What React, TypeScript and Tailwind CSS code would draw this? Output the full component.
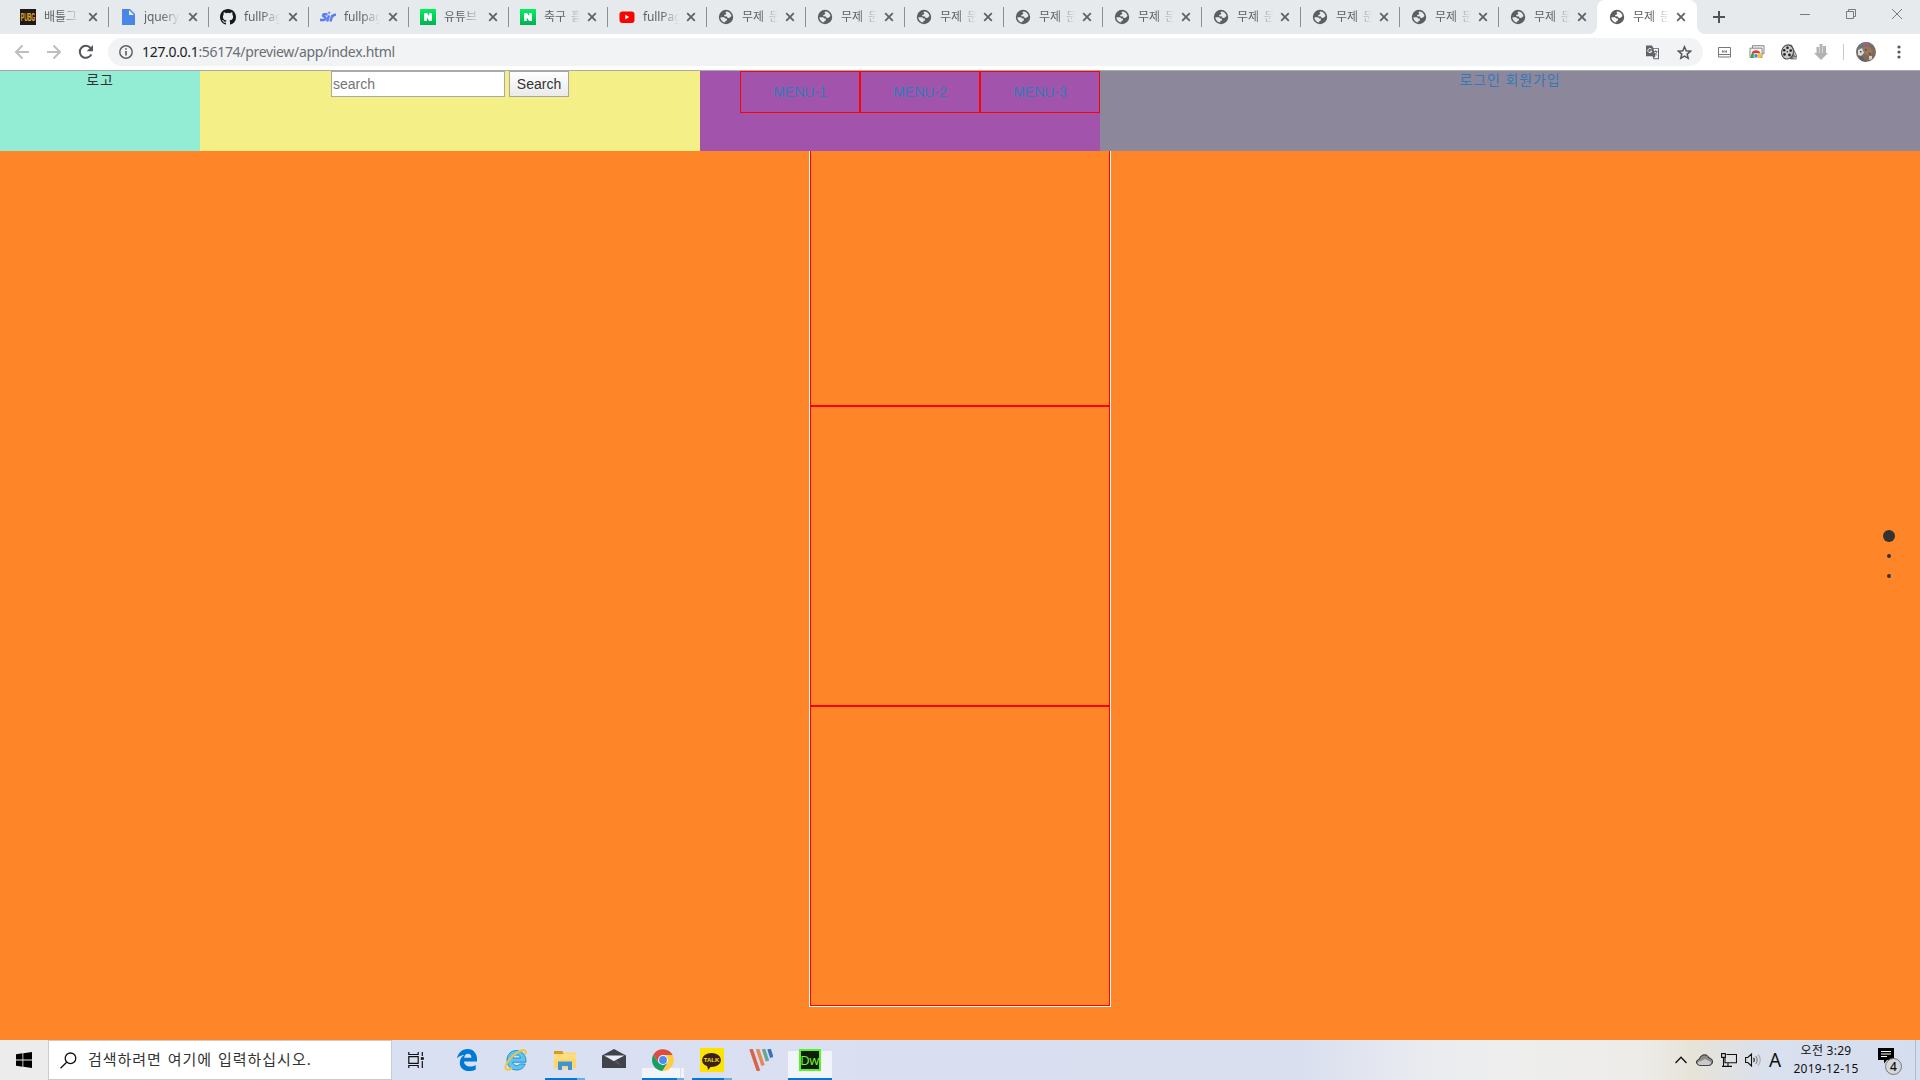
import type { ReactNode } from "react";

type TabKind = "pubg" | "doc" | "github" | "sir" | "naver" | "youtube" | "globe";

const tabs: { kind: TabKind; title: string; size: string; active?: boolean }[] = [
  { kind: "pubg", title: "배틀그", size: "w-[101px] pl-3" },
  { kind: "doc", title: "jquery_", size: "w-[100px] pl-[11px]" },
  { kind: "github", title: "fullPag", size: "w-[100px] pl-[11px]" },
  { kind: "sir", title: "fullpag", size: "w-[100px] pl-[11px]" },
  { kind: "naver", title: "유튜브", size: "w-[100px] pl-[11px]" },
  { kind: "naver", title: "축구 흘", size: "w-[99px] pl-[11px]" },
  { kind: "youtube", title: "fullPag", size: "w-[99px] pl-[11px]" },
  ...Array.from({ length: 9 }, () => ({
    kind: "globe" as TabKind,
    title: "무제 문",
    size: "w-[99px] pl-[11px]",
  })),
  { kind: "globe", title: "무제 문", size: "-ml-px w-[100px] pl-3", active: true },
];

function Favicon({ kind, active }: { kind: TabKind; active?: boolean }) {
  switch (kind) {
    case "pubg":
      return (
        <span className="flex size-4 shrink-0 items-center justify-center bg-[#1c1a1c]">
          <svg className="size-4" viewBox="0 0 16 16">
            <text
              transform="translate(0.8 12) scale(0.5 1.1)"
              className="font-['Liberation_Sans'] text-[10px] font-bold"
              fill="#f0b01c"
            >
              PUBG
            </text>
          </svg>
        </span>
      );
    case "doc":
      return (
        <svg className="size-4 shrink-0" viewBox="0 0 16 16">
          <path d="M2 0h8l5 5v11H2z" fill="#4a86e8" />
          <path d="M9 1l5 5H9z" fill="#e8f0fd" />
        </svg>
      );
    case "github":
      return (
        <svg className="size-4 shrink-0" viewBox="0 0 16 16" fill="#15191d">
          <path d="M8 0C3.58 0 0 3.58 0 8c0 3.54 2.29 6.53 5.47 7.59.4.07.55-.17.55-.38 0-.19-.01-.82-.01-1.49-2.01.37-2.53-.49-2.69-.94-.09-.23-.48-.94-.82-1.13-.28-.15-.68-.52-.01-.53.63-.01 1.08.58 1.23.82.72 1.21 1.87.87 2.33.66.07-.52.28-.87.51-1.07-1.78-.2-3.64-.89-3.64-3.95 0-.87.31-1.59.82-2.15-.08-.2-.36-1.02.08-2.12 0 0 .67-.21 2.2.82a7.6 7.6 0 0 1 4 0c1.53-1.04 2.2-.82 2.2-.82.44 1.1.16 1.92.08 2.12.51.56.82 1.27.82 2.15 0 3.07-1.87 3.75-3.65 3.95.29.25.54.73.54 1.48 0 1.07-.01 1.93-.01 2.2 0 .21.15.46.55.38A8 8 0 0 0 16 8c0-4.42-3.58-8-8-8z" />
        </svg>
      );
    case "sir":
      return (
        <svg className="size-4 shrink-0" viewBox="0 0 16 16" fill="none" stroke="#5b7cf0" strokeWidth="2.4">
          <path d="M7.5 5.200H4.5C2.6 5.200 2.300 7.400 4.300 7.800c2 .3 1.600 3.200-.8 3.200H0M9 6.300L7.200 12.500M12.300 6L10.500 12.500M11.700 8.500C12.500 6.300 13.500 5.500 16 5.700" />
          <circle cx="9.200" cy="3.800" r="0.800" strokeWidth="1" />
        </svg>
      );
    case "naver":
      return (
        <span className="flex size-4 shrink-0 items-center justify-center bg-linear-to-b from-[#00f060] to-[#02b354]">
          <svg className="size-4" viewBox="0 0 16 16">
            <path d="M4 4h3l2.200 3.300V4H12v8H9.200L6.800 8.600V12H4z" fill="#fff" />
          </svg>
        </span>
      );
    case "youtube":
      return (
        <svg className="size-4 shrink-0" viewBox="0 0 16 16">
          <rect x="0.500" y="2.500" width="15" height="11.500" rx="3" fill="#f00" />
          <path d="M6.300 5.800v4.600l3.900-2.300z" fill="#fff" />
        </svg>
      );
    default:
      return (
        <svg className="size-4 shrink-0" viewBox="0 0 16 16">
          <circle cx="8" cy="8" r="7.200" fill="#5a5e62" />
          <g fill={active ? "#fff" : "#e6eaed"}>
            <path d="M8.200 2.500c2.600 0 4.900 1.900 5.300 4.600l-1.300 1.200-1.200.8H9.700L8.900 7.500 6.200 7.300V5.900l1.500-.4.700-1.300-1-.6z" />
            <path d="M2.400 8.300h3.700l1.200 1.200h1.600v1.900l-1.600.6v1.500C4.500 13.500 2.500 11 2.400 8.300z" />
          </g>
        </svg>
      );
  }
}

function CloseX() {
  return (
    <svg className="size-[10px] shrink-0" viewBox="0 0 10 10" stroke="#5f6368" strokeWidth="1.800">
      <path d="M1.200 1.200l7.600 7.600M8.800 1.200L1.200 8.800" />
    </svg>
  );
}

function TabStrip() {
  return (
    <div className="flex h-[34px] bg-[#e6eaed] pl-2">
      {tabs.map((t, i) => (
        <div
          key={i}
          className={`${t.size} relative flex shrink-0 items-center ${t.active ? "rounded-t-lg bg-white" : ""}`}
        >
          <Favicon kind={t.kind} active={t.active} />
          <span className="ml-2 w-[36px] mask-r-from-50% mask-r-to-100% text-[12px] leading-4 tracking-[-0.1px] whitespace-nowrap text-[#5f6368] [word-spacing:2px]">
            {t.title}
          </span>
          <span className={i > 4 ? "ml-[7px] flex" : "ml-2 flex"}>
            <CloseX />
          </span>
          {!t.active && i !== 15 && <span className="absolute top-[7px] right-0 h-5 w-px bg-[#8b8f94]" />}
          {t.active && (
            <>
              <svg className="absolute bottom-0 -left-2 size-2" viewBox="0 0 8 8">
                <path d="M8 0v8H0a8 8 0 0 0 8-8z" fill="#fff" />
              </svg>
              <svg className="absolute -right-2 bottom-0 size-2" viewBox="0 0 8 8">
                <path d="M0 0v8h8a8 8 0 0 1-8-8z" fill="#fff" />
              </svg>
            </>
          )}
        </div>
      ))}
      <svg className="mt-[11px] ml-4 size-3" viewBox="0 0 12 12" stroke="#4f5357" strokeWidth="2">
        <path d="M6 0v12M0 6h12" />
      </svg>
      <div className="mt-[9px] ml-auto flex gap-9 pr-[18px]">
        <svg className="size-[10px]" viewBox="0 0 10 10" stroke="#777b7e">
          <path d="M0 5.500h10" />
        </svg>
        <svg className="size-[10px]" viewBox="0 0 10 10" stroke="#777b7e" fill="none">
          <path d="M.5 2.500h7v7h-7zM2.500 2.500v-2h7v7h-2" />
        </svg>
        <svg className="size-[10px]" viewBox="0 0 10 10" stroke="#777b7e">
          <path d="M0 0l10 10M10 0L0 10" />
        </svg>
      </div>
    </div>
  );
}

function Toolbar() {
  return (
    <div className="flex h-[37px] items-center border-b border-[#aaaaad] bg-white pl-[14px]">
      <svg className="size-4" viewBox="0 0 16 16" fill="none" stroke="#bcbec0" strokeWidth="2">
        <path d="M15 8H2.500M8.500 1.500L2 8l6.500 6.500" />
      </svg>
      <svg className="ml-4 size-4" viewBox="0 0 16 16" fill="none" stroke="#bcbec0" strokeWidth="2">
        <path d="M1 8h12.500M7.500 1.500L14 8l-6.500 6.500" />
      </svg>
      <svg className="ml-4 size-4" viewBox="0 0 16 16">
        <path d="M13.300 10.300A6 6 0 1 1 12.500 4" fill="none" stroke="#53575b" strokeWidth="2" />
        <path d="M15 1v6.300H8.700z" fill="#53575b" />
      </svg>
      <div className="ml-[14px] flex h-7 w-[1595px] items-center rounded-full bg-[#f1f3f4] px-[11px]">
        <svg className="size-[14px]" viewBox="0 0 14 14" fill="none" stroke="#5f6368" strokeWidth="1.500">
          <circle cx="7" cy="7" r="6.200" />
          <path d="M7 6v4.500M7 3.200v1.600" strokeWidth="1.700" />
        </svg>
        <span className="ml-[9px] w-[254px] text-[14px] leading-5 tracking-[-0.320px] whitespace-nowrap text-[#6a6e72]">
          <span className="text-[#202124]">127.0.0.1</span>:56174/preview/app/index.html
        </span>
        <svg className="ml-auto size-[15px]" viewBox="0 0 15 15">
          <path d="M1 .5h6l1.500 2.700H14v11H8.500l-1-3H1z" fill="#5f6368" />
          <path d="M8.500 4H13v9.300H8.500l2-2z" fill="#f1f3f4" />
          <path d="M6.500 4.200a2.100 2.100 0 1 0 .4 2H4.800" fill="none" stroke="#f1f3f4" />
          <path d="M8.500 6.500h4M10.500 5.500v1M11.800 6.500c-.5 2-1.500 3-2.500 3.700M9.500 8l2.500 2.500" fill="none" stroke="#5f6368" strokeWidth=".9" />
        </svg>
        <svg className="ml-[17px] size-[15px]" viewBox="0 0 15 15" fill="none" stroke="#53575b" strokeWidth="1.500">
          <path d="M7.500 1.800l1.700 4 4.300.4-3.300 2.900 1 4.200-3.700-2.200-3.700 2.200 1-4.200L1.500 6.200l4.300-.4z" />
        </svg>
      </div>
      <svg className="ml-[15px] h-[11px] w-[13px]" viewBox="0 0 13 11" fill="none" stroke="#777">
        <path d="M.5.5h12v7H.5zM.5 7.500h12v2.500H.5z" />
        <path d="M4.500 5.500v-2l1.500 2v-2M7 3.500l1 2M8.500 3.500v2" strokeWidth=".9" />
      </svg>
      <svg className="ml-[18px] h-4 w-[16px]" viewBox="0 0 16 16">
        <path d="M3.500 4V1.700h11.500v8h-2" fill="#eee" stroke="#888" />
        <path d="M1 4.200h12v9.300H1z" fill="#f7f7f7" stroke="#888" />
        <path d="M2 14a5 5 0 0 1 2-5.500L7 12z" fill="#31a952" />
        <path d="M2.500 9.300a4.800 4.800 0 0 1 9 0H7z" fill="#e33b2e" />
        <path d="M9 9.300h2.500a4.500 4.500 0 0 1 .2 4.700H7z" fill="#fbc116" />
        <circle cx="7" cy="11.800" r="2.100" fill="#4285f4" stroke="#fff" strokeWidth=".6" />
      </svg>
      <svg className="ml-4 size-4" viewBox="0 0 16 16">
        <path d="M6 1h4.500l5 10.500V15h-6z" fill="#777" stroke="#444" strokeWidth=".6" />
        <path d="M10.500 3l4 9M12 14h4" stroke="#ddd" />
        <ellipse cx="6.500" cy="8" rx="5.900" ry="7" fill="#ccc" stroke="#444" transform="rotate(10 6.500 8)" />
        <g fill="#222">
          <circle cx="6.500" cy="3.800" r="1.300" />
          <circle cx="3.200" cy="6.200" r="1.300" />
          <circle cx="9.700" cy="6.600" r="1.300" />
          <circle cx="3.500" cy="10.400" r="1.300" />
          <circle cx="8.500" cy="11" r="1.400" />
          <circle cx="6.300" cy="7.700" r=".7" />
        </g>
      </svg>
      <svg className="ml-[17px] h-4 w-[14px]" viewBox="0 0 14 16" fill="#b3b3b3">
        <path d="M2.500 3h2.500v6h.5V0h3v9h.5V2h3v7h2l-7 7-7-7h2.500z" />
      </svg>
      <span className="ml-[15px] h-4 w-px bg-[#c5c7c9]" />
      <svg className="ml-3 size-5 rounded-full" viewBox="0 0 20 20">
        <path d="M0 0h20v20H0z" fill="#7d6a5a" />
        <path d="M0 0h20v5L14 3 6 5 0 9z" fill="#6b7678" />
        <path d="M7 1h5v2H7z" fill="#c0508a" />
        <path d="M6 5l7-1 4 5-3 5-6-2z" fill="#94765c" />
        <path d="M2 8l4-2 2 5-3 3-3-1z" fill="#d5dbe2" />
        <path d="M13 14l3 0v3l-3 1z" fill="#d8d0c7" />
        <path d="M4 9h1.500v1.500H4zM9 7h1.500v1.500H9zM13 11h1.500v1.500H13z" fill="#4a4340" />
        <path d="M3 14l4 1 3 5H5z" fill="#56626d" />
      </svg>
      <svg className="ml-[21px] h-4 w-1" viewBox="0 0 4 16" fill="#53575b">
        <circle cx="2" cy="3" r="1.600" />
        <circle cx="2" cy="8" r="1.600" />
        <circle cx="2" cy="13" r="1.600" />
      </svg>
    </div>
  );
}

function PageView() {
  return (
    <main className="relative flex h-[969px] flex-col bg-[#ff8628] font-['Liberation_Sans','Noto_Sans_CJK_KR',sans-serif] text-[14px] leading-5 text-[#333]">
      <header className="flex h-20 shrink-0">
        <div className="w-[200px] bg-[#93edd4] text-center leading-[18px] tracking-[0.800px]">로고</div>
        <div className="flex w-[500px] items-start justify-center gap-1 bg-[#f4ef86]">
          <input
            className="h-[26px] w-[174px] border border-[#a9a9a9] bg-white px-px text-[14px] placeholder:text-[#757575]"
            placeholder="search"
          />
          <button className="h-[26px] w-[60px] border border-[#a6a6a6] bg-linear-to-b from-white to-[#eaeaea] text-[14px] leading-none">
            Search
          </button>
        </div>
        <nav className="flex w-[400px] items-start bg-[#a254ad] pl-10 text-[#337ab7]">
          {["MENU-1", "MENU-2", "MENU-3"].map((m) => (
            <a key={m} className="flex h-[42px] w-[120px] items-center justify-center border border-[#f00]">
              {m}
            </a>
          ))}
        </nav>
        <div className="flex-1 bg-[#8d879b] text-center leading-[18px] tracking-[0.900px] text-[#337ab7]">
          로그인 회원가입
        </div>
      </header>
      <section className="mx-auto w-[302px] border-x border-b border-white">
        <div className="h-[255px] border-x border-b border-[#f00]" />
        <div className="h-[300px] border border-[#f00]" />
        <div className="h-[300px] border border-[#f00]" />
      </section>
      <div className="absolute top-[459px] right-[25px] flex w-3 flex-col items-center">
        <span className="size-3 rounded-full bg-[#333]" />
        <span className="mt-3 size-1 rounded-full bg-[#333]" />
        <span className="mt-4 size-1 rounded-full bg-[#333]" />
      </div>
    </main>
  );
}

function TaskItem({ children, state }: { children: ReactNode; state?: "stack" | "running" | "current" }) {
  return (
    <div className="relative flex h-10 w-[49px] shrink-0 items-center justify-center">
      {state === "stack" && (
        <>
          <span className="absolute bottom-0 left-1 h-3 w-[38px] bg-[#f1f4fb]" />
          <span className="absolute bottom-0 left-[43px] h-3 w-[3px] bg-[#f1f4fb]" />
        </>
      )}
      {state === "current" && <span className="absolute bottom-0 left-[3px] h-[29px] w-11 bg-[#f1f4fb]" />}
      <span className="relative flex">{children}</span>
      {state === "running" && (
        <span className="absolute bottom-0 left-[5px] flex h-[2px] w-10">
          <span className="w-8 bg-[#0078d7]" />
          <span className="w-2 bg-[#66afe6]" />
        </span>
      )}
      {state === "stack" && (
        <span className="absolute bottom-0 left-1 flex h-[2px]">
          <span className="w-[35px] bg-[#0078d7]" />
          <span className="w-[7px] bg-[#66afe6]" />
        </span>
      )}
      {state === "current" && <span className="absolute bottom-0 left-[3px] h-[2px] w-11 bg-[#0078d7]" />}
    </div>
  );
}

function Taskbar() {
  return (
    <footer className="flex h-10 bg-[linear-gradient(90deg,#ececec_0,#ececec_48px,#d9e0f1_400px,#dadff0_1300px,#e9ebef_1420px,#eeeeee_1500px,#edece9_1640px,#e6e3d8_1695px,#d9e0ee_1770px,#d5deef_1920px)]">
      <div className="flex w-12 items-center justify-center">
        <svg className="size-4" viewBox="0 0 16 16">
          <path d="M0 2.200L6.500 1.300v6.200H0zM7.300 1.200L16 0v7.500H7.300zM0 8.400h6.500v6.300L0 13.800zM7.300 8.400H16V16l-8.700-1.200z" />
        </svg>
      </div>
      <div className="flex w-[344px] items-center border border-[#c9cbcd] bg-white pl-[11px]">
        <svg className="size-[17px]" viewBox="0 0 17 17" fill="none" stroke="#111" strokeWidth="1.300">
          <circle cx="10.500" cy="6.300" r="5.300" />
          <path d="M6.700 10.200L.5 16.300" />
        </svg>
        <span className="ml-[11px] pb-px text-[15px] tracking-[0.980px] whitespace-nowrap text-[#333] [word-spacing:1px]">
          검색하려면 여기에 입력하십시오.
        </span>
      </div>
      <div className="flex w-[50px] items-center pl-4">
        <svg className="h-4 w-4" viewBox="0 0 16 16" fill="none" stroke="#111" strokeWidth="1.200">
          <path d="M.8 0v2.500h9.400V0M.8 4.700h9.400v6.600H.8zM.8 16v-2.500h9.400V16M14.300 0v4M14.300 9v7" />
          <path d="M12.800 5.200h3v2.600h-3z" fill="#111" stroke="none" />
        </svg>
      </div>
      <TaskItem>
        <svg className="size-[22px]" viewBox="0 0 22 22">
          <path
            d="M1 9.500C2 4 6 0 11.500 0 18 0 21 5 21 10v2.500H8c.2 3.400 3 5 6 5 2.200 0 4-.6 5.700-1.600v4.500C17.800 21.500 15.500 22 13 22 7.500 22 3.800 18.700 3.800 13.700c0-3.400 1.800-6.100 4.800-7.600C5.400 6.200 2.800 7.200 1 9.500zM8.200 8.700h7.200c0-2.500-1.300-4-3.500-4s-3.500 1.700-3.700 4z"
            fill="#0078d7"
          />
        </svg>
      </TaskItem>
      <TaskItem>
        <svg className="size-6" viewBox="0 0 24 24">
          <path
            d="M12.500 2.500C7 2.500 3 6.500 3 12s3.800 10 9.500 10c4.300 0 7.300-2 8.700-6h-5.500c-.6 1.200-1.800 1.600-3 1.600-2.200 0-3.700-1.400-3.900-3.400H22C22.300 7.200 18 2.500 12.500 2.500zM8.900 10C9.200 8 10.600 7 12.700 7c2.200 0 3.500 1.100 3.800 3z"
            fill="#5cc4ee"
            stroke="#258fcd"
            strokeWidth="1"
          />
          <path d="M21 6.500c2-4 0-6.500-7-2.500C7.500 8 1 16 1.500 20c.3 2.800 3.500 1.800 6.500-.2" fill="none" stroke="#f2c63c" strokeWidth="2" />
        </svg>
      </TaskItem>
      <TaskItem state="running">
        <svg className="h-[19px] w-[22px]" viewBox="0 0 22 19">
          <path d="M0 1.500h22v16H0z" fill="#ffd66d" />
          <path d="M0 0h8.500L9.500 3H0z" fill="#d79c15" />
          <path d="M0 3h22v5H0z" fill="#ffdf87" opacity=".6" />
          <path d="M4 19v-8.500h14V19h-4v-4H8v4z" fill="#3c93d7" />
        </svg>
      </TaskItem>
      <TaskItem>
        <svg className="mt-[-3px] h-[19px] w-6" viewBox="0 0 24 19">
          <path d="M0 6.500L12 0l12 6.500V19H0z" fill="#404347" />
          <path d="M2 6.500h20.500l-9.500 5 5.500 4.500z" fill="#e8ecf6" />
          <path d="M13 11.500l5.500 4.500-7-3.500z" fill="#404347" />
        </svg>
      </TaskItem>
      <TaskItem state="stack">
        <svg className="size-[22px]" viewBox="0 0 24 24">
          <path d="M1.600 6A12 12 0 0 0 11.500 24L17 15 12 12 6.800 15z" fill="#17a05e" />
          <path d="M11.500 24A12 12 0 0 0 22.500 6.500H12l5.200 8.500z" fill="#ffcd42" />
          <path d="M1.600 6A12 12 0 0 1 22.500 6.500H12L6.800 15z" fill="#dc4d3f" />
          <circle cx="12" cy="12" r="5.500" fill="#f3f5fb" />
          <circle cx="12" cy="12" r="4.300" fill="#4d8cf5" />
        </svg>
      </TaskItem>
      <TaskItem state="running">
        <span className="flex size-6 items-center justify-center bg-[#fbe300]">
          <span className="relative flex h-[14px] w-[19px] items-center justify-center rounded-[50%] bg-[#3a1f1c]">
            <svg className="absolute -bottom-[3px] left-[5px] size-[6px]" viewBox="0 0 6 6">
              <path d="M0 0h6L1 6z" fill="#3a1f1c" />
            </svg>
            <span className="relative font-['Liberation_Sans'] text-[6px] leading-none font-bold text-[#fbe300]">TALK</span>
          </span>
        </span>
      </TaskItem>
      <TaskItem>
        <svg className="h-[22px] w-6" viewBox="0 0 24 22" strokeWidth="3.600" fill="none">
          <path d="M2 0l7.500 22" stroke="#d7644a" />
          <path d="M8.500 0l5.500 16.500" stroke="#e58a54" />
          <path d="M14.500 0l4 12" stroke="#6aa596" />
          <path d="M20 0l2.800 8.500" stroke="#3f6fb5" />
        </svg>
      </TaskItem>
      <TaskItem state="current">
        <span className="flex size-[22px] items-center justify-center border-2 border-[#58f51d] bg-[#101c0c] font-['Open_Sans'] text-[13px] leading-none tracking-[-0.500px] text-[#70f52e]">
          Dw
        </span>
      </TaskItem>
      <div className="ml-auto flex w-[320px] items-center pl-[75px] text-[#111]">
        <svg className="h-2 w-3" viewBox="0 0 12 8" fill="none" stroke="#111" strokeWidth="1.300">
          <path d="M.5 7L6 1.200 11.500 7" />
        </svg>
        <svg className="ml-[9px] h-3 w-[17px]" viewBox="0 0 17 12">
          <path d="M4 11.300C1.500 11.300.5 9.500.6 8c.1-1.800 1.600-2.700 2.800-2.800C4 2.500 6 .8 8.500.8c2.200 0 3.800 1.200 4.500 3.200 2.300.2 3.500 1.700 3.500 3.600 0 2.200-1.500 3.700-3.600 3.700z" fill="#8b8b8b" stroke="#222" />
          <path d="M4 11c-2-.5-2.500-1.500-2.500-2.500L9 5l6 3c0 1.500-1 2.700-2.500 3z" fill="#c9c9c9" />
        </svg>
        <svg className="ml-2 h-[14px] w-4" viewBox="0 0 16 14" fill="none" stroke="#111" strokeWidth="1.100">
          <path d="M5.500 1.500h10v8.300H4V5M.6.600h3.800v3.800H.6zM2.500 4.500v8.900M7 10v3M1 13.400h10" />
        </svg>
        <svg className="ml-2 h-[14px] w-4" viewBox="0 0 16 14" fill="none" stroke="#111" strokeWidth="1.100">
          <path d="M.6 4.500h2.200L6.500 1v12L2.800 9.500H.6zM8.500 5c1 1 1 3 0 4" />
          <path d="M10.700 3.200c2 2 2 5.600 0 7.600" stroke="#777" />
          <path d="M13 1.500c3 3 3 8 0 11" stroke="#aaa" />
        </svg>
        <span className="ml-[8px] w-[13px] font-['Noto_Sans'] text-[19px] leading-none">A</span>
        <div className="ml-[9px] w-[70px] pb-px text-center text-[12px] leading-[18px] tracking-[0.250px] whitespace-nowrap">
          <div>오전 3:29</div>
          <div>2019-12-15</div>
        </div>
        <div className="relative ml-[17px] h-6 w-6">
          <svg className="absolute top-0 left-0 size-[17px]" viewBox="0 0 17 17">
            <path d="M0 0h16v12H9l-3 3.500V12H0z" />
            <path d="M3 3.500h10M3 6h10M3 8.500h6" stroke="#fff" strokeWidth="1.100" />
          </svg>
          <span className="absolute right-0 -bottom-[3px] flex size-[17px] items-center justify-center rounded-full border border-[#777] bg-[#d4d6da] text-[12px] leading-none font-medium">
            4
          </span>
        </div>
        <span className="ml-auto mr-1 h-10 w-px bg-[#b4bccb]" />
      </div>
    </footer>
  );
}

export default function App() {
  return (
    <div className="flex h-[1080px] w-[1920px] flex-col overflow-hidden font-['Noto_Sans','Noto_Sans_CJK_KR',sans-serif]">
      <TabStrip />
      <Toolbar />
      <PageView />
      <Taskbar />
    </div>
  );
}
